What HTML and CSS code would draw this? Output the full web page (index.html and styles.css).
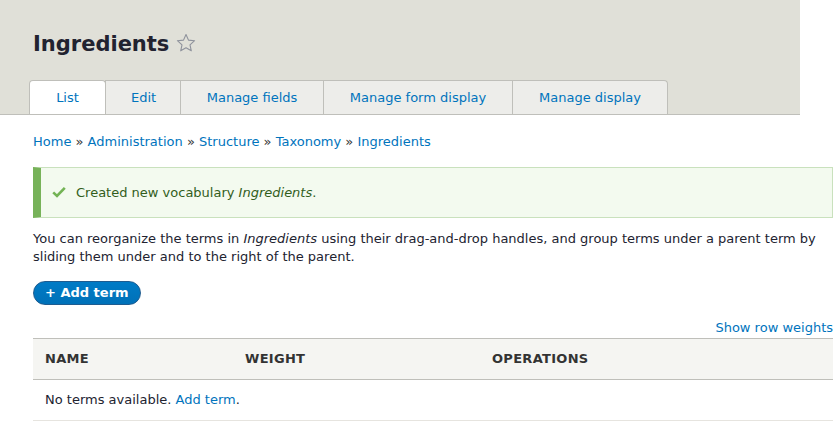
FILE: index.html
```html
<!DOCTYPE html>
<html lang="en">
<head>
    <meta charset="UTF-8">
    <meta name="viewport" content="width=device-width, initial-scale=1.0">
    <title>Ingredients</title>
    <link rel="stylesheet" href="styles.css">
</head>
<body>

    <!-- Page header with title and tabs -->
    <header class="page-header">
        <h1 class="page-title">Ingredients
            <svg class="star" width="20" height="20" viewBox="0 0 20 20">
                <path d="M10 1.5l2.5 5.6 6.1.6-4.6 4.1 1.3 6L10 14.7l-5.3 3.1 1.3-6L1.4 7.7l6.1-.6z" fill="none" stroke="#8e929c" stroke-width="1.1" stroke-linejoin="round"/>
            </svg>
        </h1>
        <ul class="tabs">
            <li class="active"><a href="#">List</a></li>
            <li><a href="#">Edit</a></li>
            <li><a href="#">Manage fields</a></li>
            <li><a href="#">Manage form display</a></li>
            <li><a href="#">Manage display</a></li>
        </ul>
    </header>

    <!-- Main content -->
    <main class="content">
        <nav class="breadcrumb">
            <a href="#">Home</a> » <a href="#">Administration</a> » <a href="#">Structure</a> » <a href="#">Taxonomy</a> » <a href="#">Ingredients</a>
        </nav>

        <div class="message">
            <svg class="check" width="14" height="12" viewBox="0 0 14 12">
                <path d="M1.2 6.4l3.8 3.6L12.8 1.8" fill="none" stroke="#73b355" stroke-width="2.6"/>
            </svg>Created new vocabulary <em>Ingredients</em>.
        </div>

        <p class="help">You can reorganize the terms in <em>Ingredients</em> using their drag-and-drop handles, and group terms under a parent term by sliding them under and to the right of the parent.</p>

        <a href="#" class="button">+ Add term</a>

        <div class="weights"><a href="#">Show row weights</a></div>

        <table class="terms">
            <thead>
                <tr>
                    <th class="col-name">Name</th>
                    <th class="col-weight">Weight</th>
                    <th>Operations</th>
                </tr>
            </thead>
            <tbody>
                <tr>
                    <td colspan="3">No terms available. <a href="#">Add term</a>.</td>
                </tr>
            </tbody>
        </table>
    </main>

</body>
</html>
```

FILE: styles.css
```css
/* Base */
body {
    margin: 0;
    font-family: "DejaVu Sans", sans-serif;
    font-size: 13px;
    line-height: 20px;
    color: #222330;
    background: #fff;
    overflow: hidden;
}

a {
    color: #0074bd;
    text-decoration: none;
}

/* Header */
.page-header {
    width: 767px;
    background: #e0e0d8;
    padding: 0 0 0 33px;
    border-bottom: 1px solid #bfbfba;
}

.page-title {
    margin: 0;
    padding-top: 30px;
    font-size: 21px;
    line-height: 28px;
    font-weight: bold;
    color: #222330;
    display: flex;
    align-items: center;
}

.star {
    margin-left: 7px;
    margin-top: -2px;
}

.tabs {
    list-style: none;
    margin: 22px 0 0 -4px;
    padding: 0;
    display: flex;
}

.tabs li {
    background: #ededea;
    border: 1px solid #bfbfba;
    border-bottom: none;
    margin-left: -1px;
}

.tabs li:first-child {
    margin-left: 0;
    border-top-left-radius: 4px;
}

.tabs li:last-child {
    border-top-right-radius: 4px;
}

.tabs li.active {
    background: #fff;
    border-radius: 4px 4px 0 0;
}

.tabs a {
    display: block;
    height: 33px;
    line-height: 33px;
    padding: 0 25px;
    text-align: center;
}

.tabs li:nth-child(1) a { width: 25px; }
.tabs li:nth-child(2) a { width: 22px; padding: 0 27px 0 25px; }
.tabs li:nth-child(3) a { width: 92px; }
.tabs li:nth-child(4) a { width: 138px; }
.tabs li:nth-child(5) a { width: 104px; }

/* Content */
.content {
    padding: 0 0 0 33px;
    width: 800px;
}

.breadcrumb {
    margin-top: 17px;
    color: #333;
}

.message {
    margin-top: 15px;
    height: 51px;
    box-sizing: border-box;
    background: #f3faef;
    border: 1px solid #c9e1bd;
    border-left: 8px solid #77b259;
    color: #325e1c;
    padding: 15px 0 0 11px;
}

.check {
    margin-right: 10px;
    vertical-align: -1px;
}

.help {
    margin: 12px 0 0;
    line-height: 18px;
}

.button {
    display: block;
    width: fit-content;
    margin-top: 15px;
    height: 24px;
    line-height: 22px;
    padding: 0 11px;
    border-radius: 12px;
    background: linear-gradient(#007bc6, #0071b8);
    border: 1px solid #1e5c90;
    box-sizing: border-box;
    color: #fff;
    font-weight: bold;
    white-space: nowrap;
}

.weights {
    text-align: right;
    margin-top: 13px;
}

.terms {
    width: 800px;
    border-collapse: collapse;
    margin-top: 0;
}

.terms th {
    background: #f5f5f2;
    border-top: 1px solid #bfbfba;
    border-bottom: 1px solid #bfbfba;
    height: 40px;
    padding: 0 12px;
    text-align: left;
    text-transform: uppercase;
    font-weight: bold;
    color: #333;
    letter-spacing: 0.3px;
}

.terms .col-name { width: 176px; }
.terms .col-weight { width: 223px; }

.terms td {
    height: 40px;
    padding: 0 12px;
    border-bottom: 1px solid #e6e4df;
}
```
